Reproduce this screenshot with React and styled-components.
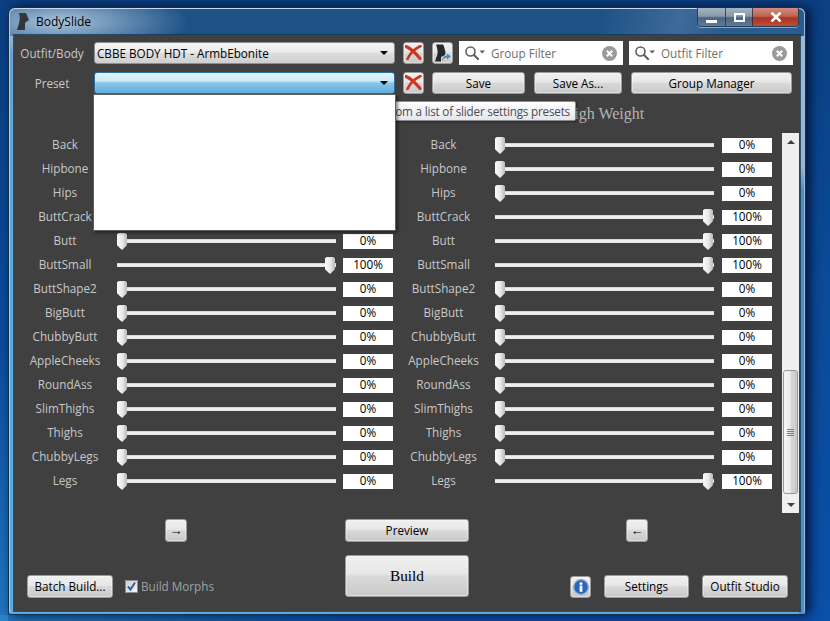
import React from 'react';
import styled, { createGlobalStyle } from 'styled-components';

const UI_FONT = `"Open Sans", "Noto Sans", "Liberation Sans", sans-serif`;
const SERIF = `"Liberation Serif", serif`;

const GlobalStyle = createGlobalStyle`
  html, body {
    margin: 0;
    padding: 0;
    overflow: hidden;
  }
  body {
    font-family: ${UI_FONT};
    font-size: 11.7px;
  }
`;

const Desktop = styled.div`
  width: 830px;
  height: 621px;
  box-sizing: border-box;
  padding: 7px 24px 6px 8px;
  background:
    linear-gradient(0deg, rgba(50, 150, 210, 0.55) 0, rgba(50, 150, 210, 0) 45%) left / 8px 100% no-repeat,
    linear-gradient(90deg, rgba(50, 150, 210, 0.5) 0, rgba(50, 150, 210, 0) 45%) bottom / 100% 6px no-repeat,
    linear-gradient(180deg, #0b4081 0%, #0a4a98 45%, #0a50a8 100%);
`;

const Window = styled.div`
  width: 798px;
  height: 608px;
  box-sizing: border-box;
  display: flex;
  flex-direction: column;
  padding: 0 5px 3px 5px;
  border: 1px solid #14304f;
  border-radius: 7px 7px 3px 3px;
  background:
    radial-gradient(ellipse 130px 34px at 50px 14px, rgba(205, 225, 240, 0.8), rgba(205, 225, 240, 0) 100%),
    linear-gradient(100deg, rgba(255, 255, 255, 0) 74%, rgba(255, 255, 255, 0.14) 84%, rgba(255, 255, 255, 0.05) 90%) top / 100% 28px no-repeat,
    linear-gradient(180deg, #1e5287 0, #1e5287 28px, rgba(30, 80, 135, 0) 28px),
    linear-gradient(180deg, #9db7d0 0, #9db7d0 26%, #4c8fc8 30%, #4c8fc8 100%) right / 6px 100% no-repeat,
    linear-gradient(180deg, #6d9fc8 0, #58ace0 50%, #58ace0 100%);
  box-shadow: inset 0 1px 0 #c9dbea, inset 1px 0 0 #a9cbe6, inset -1px 0 0 #9cb8d2, 4px 0 12px rgba(0, 10, 40, 0.85);
`;

const TitleBar = styled.div`
  height: 27px;
  flex-shrink: 0;
  display: flex;
  align-items: flex-start;
  color: #000;
`;

const TitleIcon = styled.svg`
  width: 13px;
  height: 17px;
  margin: 5px 6px 0 3px;
`;

const TitleText = styled.span`
  font-size: 12px;
  line-height: 16px;
  margin-top: 6px;
`;

const CaptionButtons = styled.div`
  margin-left: auto;
  margin-right: 1px;
  display: flex;
  height: 18px;
  border: 1px solid #28415e;
  border-top: 0;
  border-radius: 0 0 4px 4px;
  overflow: hidden;
  box-shadow: 0 1px 0 rgba(255, 255, 255, 0.45);
`;

const CaptionButton = styled.div`
  width: ${p => (p.$close ? '46px' : '27px')};
  box-sizing: border-box;
  display: flex;
  align-items: ${p => (p.$low ? 'flex-end' : 'center')};
  justify-content: center;
  padding-bottom: ${p => (p.$low ? '3px' : '0')};
  border-left: ${p => (p.$first ? '0' : '1px solid rgba(20, 40, 70, 0.7)')};
  background: ${p => (p.$close
    ? 'linear-gradient(180deg, #cf8d80 0%, #bf6452 45%, #a93422 55%, #bd4c38 100%)'
    : 'linear-gradient(180deg, #a3b3c3 0%, #8899ab 45%, #4b6482 55%, #627c98 100%)')};
`;

const Client = styled.div`
  position: relative;
  width: 786px;
  height: 576px;
  box-sizing: border-box;
  padding-top: 7px;
  background: #404040;
  box-shadow: 0 0 0 1px rgba(20, 50, 80, 0.75);
`;

const ToolRow = styled.div`
  display: flex;
  align-items: center;
  height: 22px;
  padding-left: 7px;
  margin-bottom: ${p => p.$mb || 0}px;
`;

const FieldLabel = styled.div`
  width: 62px;
  margin-right: 11px;
  display: flex;
  justify-content: center;
  white-space: nowrap;
  color: #c8c8c8;
`;

const Combo = styled.div`
  width: 301px;
  height: 22px;
  box-sizing: border-box;
  display: flex;
  align-items: center;
  justify-content: space-between;
  padding: 0 6px 1px 2px;
  margin-right: 8px;
  border: 1px solid ${p => (p.$active ? '#2f6f9f' : '#8e8f8f')};
  border-radius: 3px;
  color: #000;
  white-space: nowrap;
  background: ${p => (p.$active
    ? 'linear-gradient(180deg, #e4f4fc 0%, #cde9f8 40%, #86c6ea 50%, #62addb 100%)'
    : 'linear-gradient(180deg, #f4f4f4 0%, #ececec 45%, #dddddd 50%, #cfcfcf 100%)')};
`;

const Caret = styled.span`
  width: 0;
  height: 0;
  border-left: 4px solid transparent;
  border-right: 4px solid transparent;
  border-top: 4px solid #000;
`;

const Button = styled.div`
  width: ${p => p.$w}px;
  height: ${p => p.$h || 22}px;
  margin-right: ${p => p.$mr || 0}px;
  padding-bottom: 1px;
  flex-shrink: 0;
  box-sizing: border-box;
  display: flex;
  align-items: center;
  justify-content: center;
  border: 1px solid #9a9a9a;
  border-radius: 3px;
  color: #000;
  white-space: nowrap;
  background: linear-gradient(180deg, #f0f0f0 0%, #e7e7e7 45%, #d9d9d9 50%, #c9c9c9 100%);
  box-shadow: inset 0 0 0 1px rgba(255, 255, 255, 0.35);
`;

const ArrowButton = styled(Button)`
  font-family: "Liberation Sans", sans-serif;
  font-size: 13px;
`;

const BuildButton = styled(Button)`
  padding-bottom: 0;
  font-family: ${SERIF};
  font-size: 15.3px;
`;

const FilterBox = styled.div`
  width: 164px;
  height: 24px;
  margin-right: ${p => p.$mr || 0}px;
  box-sizing: border-box;
  display: flex;
  align-items: center;
  padding: 0 6px 0 6px;
  background: #fff;
  color: #6d6d6d;
`;

const FilterText = styled.span`
  flex: 1;
  margin-left: 6px;
`;

const HeadingRow = styled.div`
  display: grid;
  grid-template-columns: 1fr 1fr;
  height: 39px;
  align-items: center;
  justify-items: center;
  font-family: ${SERIF};
  font-size: 16px;
  color: #b4b4b4;
`;

const ListArea = styled.div`
  display: flex;
  height: 380px;
`;

const SliderGrid = styled.div`
  width: 768px;
`;

const SliderRow = styled.div`
  height: 24px;
  display: grid;
  grid-template-columns: 102px 220px 57px 101px 220px 58px;
  align-items: center;
`;

const SliderLabel = styled.div`
  padding-bottom: 2px;
  text-align: center;
  white-space: nowrap;
  color: #c8c8c8;
`;

const Track = styled.div`
  position: relative;
  height: 4px;
  margin-left: 1px;
  background: linear-gradient(180deg, #cfcfcf 0, #f0f0f0 40%, #e6e6e6 100%);
`;

const Thumb = styled.div`
  position: absolute;
  top: -6px;
  left: ${p => p.$value * 2.08}px;
  width: 10px;
  height: 17px;
  background: linear-gradient(90deg, #fbfbfb 0%, #e8e8e8 55%, #b9b9b9 100%);
  clip-path: polygon(18% 0, 82% 0, 100% 8%, 100% 72%, 50% 100%, 0 72%, 0 8%);
`;

const ValueBox = styled.div`
  width: 50px;
  height: 15px;
  justify-self: end;
  background: #fff;
  color: #000;
  line-height: 13px;
  text-align: center;
`;

const ScrollBar = styled.div`
  width: 17px;
  height: 380px;
  display: flex;
  flex-direction: column;
  background: #efefef;
`;

const ScrollArrow = styled.div`
  height: 17px;
  flex-shrink: 0;
  display: flex;
  align-items: center;
  justify-content: center;
`;

const ScrollCaret = styled.span`
  width: 0;
  height: 0;
  border-left: 4px solid transparent;
  border-right: 4px solid transparent;
  ${p => (p.$up ? 'border-bottom: 4px solid #404040;' : 'border-top: 4px solid #404040;')}
`;

const ScrollTrack = styled.div`
  flex: 1;
  padding-top: 220px;
`;

const ScrollThumb = styled.div`
  width: 15px;
  height: 124px;
  margin-left: 1px;
  box-sizing: border-box;
  display: flex;
  flex-direction: column;
  align-items: center;
  justify-content: center;
  gap: 1px;
  border: 1px solid #979797;
  border-radius: 3px;
  background: linear-gradient(90deg, #f6f6f6 0%, #ececec 45%, #d8d8d8 55%, #c8c8c8 100%);
`;

const Grip = styled.span`
  width: 7px;
  height: 1px;
  background: #7d7d7d;
`;

const Footer = styled.div`
  display: grid;
  grid-template-columns: 331px 124px 331px;
  grid-template-rows: 23px 43px;
  row-gap: 13px;
  padding-top: 6px;
`;

const FooterTopSide = styled.div`
  padding-left: ${p => p.$pad}px;
`;

const FooterBottomSide = styled.div`
  display: flex;
  align-items: flex-end;
  padding-left: ${p => p.$pad}px;
`;

const CheckWrap = styled.div`
  height: 23px;
  box-sizing: border-box;
  padding-bottom: 1px;
  display: flex;
  align-items: center;
  margin-left: 12px;
  color: #a0a0a0;
  white-space: nowrap;
`;

const CheckBox = styled.div`
  width: 13px;
  height: 13px;
  margin-right: 3px;
  box-sizing: border-box;
  display: flex;
  align-items: center;
  justify-content: center;
  border: 1px solid #8e8f8f;
  background: linear-gradient(135deg, #cfcfcf, #f6f6f6);
`;

const Popup = styled.div`
  position: absolute;
  left: 79px;
  top: 59px;
  width: 303px;
  height: 137px;
  box-sizing: border-box;
  background: #fff;
  border: 1px solid #5f5f5f;
  box-shadow: 2px 2px 3px rgba(0, 0, 0, 0.45);
  z-index: 3;
`;

const Tooltip = styled.div`
  position: absolute;
  right: 224px;
  top: 66px;
  height: 20px;
  box-sizing: border-box;
  padding: 0 5px;
  display: flex;
  align-items: center;
  white-space: nowrap;
  letter-spacing: -0.2px;
  color: #4c4c4c;
  border: 1px solid #8b8b8b;
  border-radius: 2px;
  background: linear-gradient(180deg, #ffffff, #e4e5f0);
  box-shadow: 1px 1px 2px rgba(0, 0, 0, 0.4);
  z-index: 2;
`;

const RedX = () => (
  <svg width="17" height="15" viewBox="0 0 17 15">
    <path d="M1 1.5 C6 3.5 11 8.5 15 13.5" fill="none" stroke="#cf3322" strokeWidth="3" strokeLinecap="round" />
    <path d="M15.5 1 C10.5 3.5 5 8 2.5 14" fill="none" stroke="#cf3322" strokeWidth="2.6" strokeLinecap="round" />
  </svg>
);

const ShapeIcon = () => (
  <svg width="17" height="18" viewBox="0 0 17 18">
    <path d="M2 0.5 L9 0.5 C10.5 3 10.5 5 11.5 8 L11 11 L7 13 L7 17.5 L1 17.5 L3.5 10 C4 7 3 3.5 2 0.5 Z" fill="#26282b" />
    <path d="M8 17 C8.5 13 10.5 11.5 13 11.5 L13 9.5 L16.8 12.5 L13 15.5 L13 13.6 C11 13.6 9.5 14.5 8 17 Z" fill="#4a86c6" />
  </svg>
);

const SearchIcon = () => (
  <svg width="20" height="14" viewBox="0 0 20 14">
    <circle cx="5.5" cy="5.5" r="4.5" fill="none" stroke="#5e5e5e" strokeWidth="1.6" />
    <path d="M9 9 L13 13" stroke="#5e5e5e" strokeWidth="2.2" strokeLinecap="round" />
    <path d="M14.5 4.5 L20 4.5 L17.2 7.5 Z" fill="#5e5e5e" />
  </svg>
);

const ClearIcon = () => (
  <svg width="15" height="15" viewBox="0 0 15 15">
    <circle cx="7.5" cy="7.5" r="7.5" fill="#9a9a9a" />
    <path d="M4.8 4.8 L10.2 10.2 M10.2 4.8 L4.8 10.2" stroke="#fff" strokeWidth="2" />
  </svg>
);

const InfoIcon = () => (
  <svg width="16" height="16" viewBox="0 0 16 16">
    <circle cx="8" cy="8" r="7.3" fill="#2467c4" stroke="#8fa6c4" strokeWidth="1.3" />
    <circle cx="8" cy="4.4" r="1.5" fill="#fff" />
    <rect x="6.6" y="6.6" width="2.8" height="6.2" fill="#fff" />
  </svg>
);

const sliders = [
  ['Back', 0, 0],
  ['Hipbone', 0, 0],
  ['Hips', 0, 0],
  ['ButtCrack', 100, 100],
  ['Butt', 0, 100],
  ['ButtSmall', 100, 100],
  ['ButtShape2', 0, 0],
  ['BigButt', 0, 0],
  ['ChubbyButt', 0, 0],
  ['AppleCheeks', 0, 0],
  ['RoundAss', 0, 0],
  ['SlimThighs', 0, 0],
  ['Thighs', 0, 0],
  ['ChubbyLegs', 0, 0],
  ['Legs', 0, 100],
];

function Slider({ name, value }) {
  return (
    <>
      <SliderLabel>{name}</SliderLabel>
      <Track><Thumb $value={value} /></Track>
      <ValueBox>{value}%</ValueBox>
    </>
  );
}

export default function App() {
  return (
    <Desktop>
      <GlobalStyle />
      <Window>
        <TitleBar>
          <TitleIcon viewBox="0 0 13 17">
            <path d="M2 0 L9 0 C10 2 10.5 4 12 7 L9 9 L8 10 L8 17 L0 17 L2 10 C3 7 3 3 2 0 Z" fill="#33373d" />
          </TitleIcon>
          <TitleText>BodySlide</TitleText>
          <CaptionButtons>
            <CaptionButton $first $low>
              <svg width="11" height="3" viewBox="0 0 11 3"><rect width="11" height="3" fill="#fff" /></svg>
            </CaptionButton>
            <CaptionButton>
              <svg width="11" height="9" viewBox="0 0 11 9"><rect x="1" y="1" width="9" height="7" fill="none" stroke="#fff" strokeWidth="2" /></svg>
            </CaptionButton>
            <CaptionButton $close>
              <svg width="12" height="10" viewBox="0 0 12 10"><path d="M1.5 0.5 L10.5 9.5 M10.5 0.5 L1.5 9.5" stroke="#fff" strokeWidth="2.6" /></svg>
            </CaptionButton>
          </CaptionButtons>
        </TitleBar>
        <Client>
          <ToolRow $mb={8}>
            <FieldLabel>Outfit/Body</FieldLabel>
            <Combo>CBBE BODY HDT - ArmbEbonite<Caret /></Combo>
            <Button $w={21} $mr={8}><RedX /></Button>
            <Button $w={21} $mr={6}><ShapeIcon /></Button>
            <FilterBox $mr={6}><SearchIcon /><FilterText>Group Filter</FilterText><ClearIcon /></FilterBox>
            <FilterBox><SearchIcon /><FilterText>Outfit Filter</FilterText><ClearIcon /></FilterBox>
          </ToolRow>
          <ToolRow>
            <FieldLabel>Preset</FieldLabel>
            <Combo $active><span /><Caret /></Combo>
            <Button $w={21} $mr={8}><RedX /></Button>
            <Button $w={93} $mr={9}>Save</Button>
            <Button $w={88} $mr={9}>Save As...</Button>
            <Button $w={161}>Group Manager</Button>
          </ToolRow>
          <HeadingRow>
            <span>Low Weight</span>
            <span>High Weight</span>
          </HeadingRow>
          <ListArea>
            <SliderGrid>
              {sliders.map(([name, low, high]) => (
                <SliderRow key={name}>
                  <Slider name={name} value={low} />
                  <Slider name={name} value={high} />
                </SliderRow>
              ))}
            </SliderGrid>
            <ScrollBar>
              <ScrollArrow><ScrollCaret $up /></ScrollArrow>
              <ScrollTrack>
                <ScrollThumb><Grip /><Grip /><Grip /><Grip /></ScrollThumb>
              </ScrollTrack>
              <ScrollArrow><ScrollCaret /></ScrollArrow>
            </ScrollBar>
          </ListArea>
          <Footer>
            <FooterTopSide $pad={151}><ArrowButton $w={22} $h={23}>→</ArrowButton></FooterTopSide>
            <Button $w={124} $h={23}>Preview</Button>
            <FooterTopSide $pad={157}><ArrowButton $w={22} $h={23}>←</ArrowButton></FooterTopSide>
            <FooterBottomSide $pad={13}>
              <Button $w={86} $h={23}>Batch Build...</Button>
              <CheckWrap>
                <CheckBox>
                  <svg width="11" height="11" viewBox="0 0 11 11"><path d="M2 5.5 L4.5 8.5 L9 1.5" fill="none" stroke="#2f5f9f" strokeWidth="2" /></svg>
                </CheckBox>
                Build Morphs
              </CheckWrap>
            </FooterBottomSide>
            <BuildButton $w={124} $h={42}>Build</BuildButton>
            <FooterBottomSide $pad={101}>
              <Button $w={21} $h={22} $mr={13}><InfoIcon /></Button>
              <Button $w={85} $h={23} $mr={13}>Settings</Button>
              <Button $w={86} $h={23}>Outfit Studio</Button>
            </FooterBottomSide>
          </Footer>
          <Tooltip>Select from a list of slider settings presets</Tooltip>
          <Popup />
        </Client>
      </Window>
    </Desktop>
  );
}
